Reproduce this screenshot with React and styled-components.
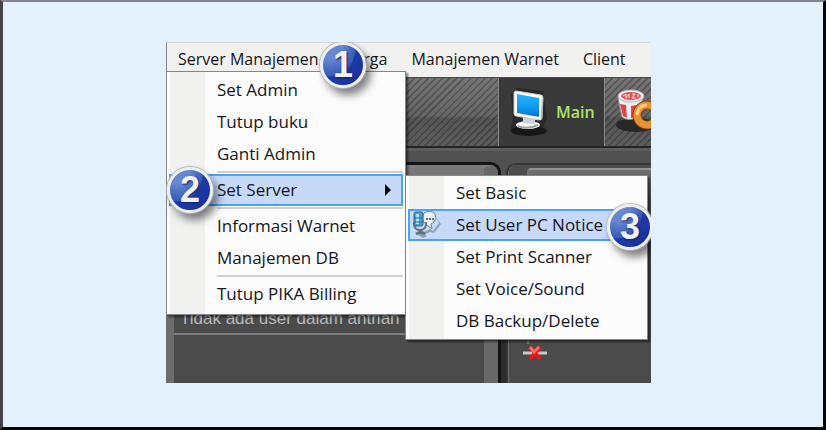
import React from 'react';
import styled, { createGlobalStyle } from 'styled-components';

const GlobalStyle = createGlobalStyle`
  * { box-sizing: border-box; }
  body { margin: 0; background: #e3f1fd; }
  button { border: 0; padding: 0; margin: 0; background: none; font: inherit; color: inherit; text-align: left; }
`;

const Frame = styled.main`
  min-height: 100vh;
  padding: 40px 172px 44px 163px;
  border-style: solid;
  border-width: 2px 3px 3px;
  border-color: #85838c #05050c #05050c #444247;
  background: #e3f1fd;
  display: flex;
  font-family: 'Open Sans', 'Noto Sans', sans-serif;
  font-size: 17px;
  color: #15151c;
`;

const AppWindow = styled.section`
  position: relative;
  flex: 1;
  min-width: 0;
  display: flex;
  flex-direction: column;
  overflow: hidden;
  background: #4b4b4b;
`;

const MenuBar = styled.nav`
  height: 35px;
  flex: none;
  display: flex;
  align-items: center;
  gap: 24px;
  padding: 0 11px 3px;
  background: #f1f1f0;
  border-top: 1px solid #d6d6d8;
  border-left: 1px solid #85858f;
  font-size: 16px;
`;

const MenuBarItem = styled.button`
  line-height: 24px;
  white-space: nowrap;
`;

const Menu = styled.div`
  position: absolute;
  z-index: ${p => (p.$sub ? 2 : 1)};
  left: ${p => (p.$sub ? 239 : 0)}px;
  top: ${p => (p.$sub ? 133 : 29)}px;
  width: ${p => (p.$sub ? 243 : 240)}px;
  padding: ${p => (p.$sub ? '1px 2px 2px' : '2px 2px 4px')};
  border: 1px solid #85858b;
  background: linear-gradient(to right, #fcfcfc 3px, #f1f1f0 3px 38px, #fcfcfc 38px);
  box-shadow: 2px 2px 2px rgba(0, 0, 0, 0.5);
`;

const MenuItem = styled.button`
  display: flex;
  align-items: center;
  width: 100%;
  height: 32px;
  padding-right: 10px;
  border: 2px solid ${p => (p.$active ? '#4aa3f5' : 'transparent')};
  background: ${p => (p.$active ? '#c6d9f8' : 'transparent')};
  white-space: nowrap;
  line-height: 24px;
`;

const IconSlot = styled.span`
  flex: none;
  display: flex;
  width: 46px;
  height: 28px;
  padding-left: 2px;
`;

const Label = styled.span`
  flex: 1;
`;

const Separator = styled.hr`
  height: 2px;
  margin: 1px 0 1px 48px;
  border: 0;
  background: #cfcfd0;
`;

const Toolbar = styled.div`
  height: 71px;
  flex: none;
  display: flex;
  border-top: 1px solid #4a4a4a;
  border-bottom: 2px solid #252525;
  background:
    repeating-linear-gradient(135deg, rgba(0, 0, 0, 0.25) 0 1px, transparent 2px 5px),
    linear-gradient(#747474, #666 55%, #565656 60%, #5c5c5c);
`;

const ToolbarSpace = styled.div`
  width: 333px;
  flex: none;
  border-right: 1px solid #898989;
`;

const ToolButton = styled.button`
  flex: none;
  display: flex;
  align-items: center;
  gap: 5px;
  width: ${p => (p.$active ? 106 : 80)}px;
  padding-left: ${p => (p.$active ? 9 : 7)}px;
  color: #abe36c;
  font-size: 16px;
  font-weight: 600;
  background: ${p => (p.$active ? '#393939' : 'transparent')};
  border-right: 1px solid #898989;
`;

const Workspace = styled.div`
  flex: 1;
  display: grid;
  grid-template-columns: 333px 1fr;
  padding-top: 14px;
  border-top: 3px solid #5c5c5c;
  background: linear-gradient(#515151 40px, #2b2b2b 41px);
`;

const QueuePanel = styled.section`
  margin-right: 1px;
  border-style: solid;
  border-width: 3px 14px 0 8px;
  border-color: #7b7b7b #686868 #7b7b7b #6c6c6e;
  border-radius: 0 8px 0 0;
  background: linear-gradient(#777 10px, #4b4b4b 11px);
  box-shadow: 0 0 0 3px #141414;
`;

const QueueText = styled.p`
  margin: 0;
  padding: 140px 0 4px 6px;
  border-bottom: 2px solid #7c7c7c;
  color: #b9b9b9;
  font: 17px/21px 'Liberation Sans', Arial, sans-serif;
  white-space: nowrap;
`;

const DetailPanel = styled.section`
  margin-left: 9px;
  padding: 3px 0 0 18px;
  border-left: 1px solid #6c6c6c;
  border-top-left-radius: 8px;
  background: #4b4b4b;
  box-shadow: 0 0 0 2px #363636;
`;

const DetailHeader = styled.div`
  height: 176px;
  border-top: 2px solid #929292;
  border-left: 2px solid #777;
  border-top-left-radius: 4px;
  background: linear-gradient(#707070, #4b4b4b 30px);
`;

const StatusIcon = styled.svg`
  display: block;
  margin-left: -6px;
`;

const Badge = styled.span`
  position: absolute;
  z-index: 3;
  left: ${p => p.$x}px;
  top: ${p => p.$y}px;
  width: 46px;
  height: 46px;
  display: flex;
  align-items: center;
  justify-content: center;
  border: 3px solid #eeeef0;
  border-radius: 50%;
  background:
    radial-gradient(ellipse at 20% 0%, #6687cf 0 25%, #3459b7 55%, transparent 56%),
    linear-gradient(135deg, #2446ad, #152f9e);
  box-shadow: 0 0 1px 1px #b5b5bb, 5px 7px 8px rgba(0, 0, 0, 0.5);
  color: #f2f2f4;
  font: 700 36px/40px 'Liberation Sans', Arial, sans-serif;
  text-shadow: 1px 1px 2px #102064;
`;

const MonitorIcon = () => (
  <svg width="43" height="54" viewBox="0 0 43 54" aria-hidden="true">
    <defs>
      <linearGradient id="screen" x2="0" y2="1">
        <stop stopColor="#25b5fb" />
        <stop offset=".5" stopColor="#159cf2" />
        <stop offset="1" stopColor="#0872db" />
      </linearGradient>
    </defs>
    <path d="M3 10 9 3l26 3 4 28-5 10-24 5-8-5 3-9z" fill="#292929" />
    <ellipse cx="21" cy="46" rx="18" ry="5" fill="#171717" />
    <ellipse cx="20" cy="40" rx="12" ry="4" fill="#f7f7f7" />
    <path d="M15 32 27 34v5l-12-1z" fill="#ced2d6" />
    <path d="M10 41q9 4 20-1" fill="none" stroke="#9da2a7" strokeWidth="2" />
    <path d="M6 8q0-2 2-2l25 4q2 0 2 3l-1 20q0 2-3 2L8 31q-2 0-2-3z" fill="#fff" stroke="#c8c8c8" />
    <path d="m9 9 22 4v19L9 28z" fill="url(#screen)" />
    <path d="m34 11 1 20-2 4z" fill="#a4a4a4" />
  </svg>
);

const SnackIcon = () => (
  <svg width="48" height="52" viewBox="0 0 48 52" aria-hidden="true">
    <ellipse cx="24" cy="39" rx="20" ry="7" fill="#272727" />
    <path d="m6 12 4 19q7 5 15 0l6-19z" fill="#eee" stroke="#929292" />
    <path d="m8 18 3 12 4 2-1-13m5 1v12l4-1 2-12" fill="#d7484c" />
    <ellipse cx="19" cy="10" rx="13" ry="6" fill="#f5eeee" stroke="#b8b8b8" />
    <ellipse cx="19" cy="10" rx="10" ry="4" fill="#de5557" />
    <path d="m11 10 3-2v4l3-4v4m3-4h3l-3 4h4m2-4v3" fill="none" stroke="#f8dede" />
    <circle cx="35" cy="29" r="10" fill="none" stroke="#87420f" strokeWidth="9" />
    <circle cx="35" cy="29" r="10" fill="none" stroke="#e69232" strokeWidth="7" />
    <path d="M25 29q1-10 10-10" fill="none" stroke="#ffce78" strokeWidth="3" />
  </svg>
);

const VoiceIcon = () => (
  <svg width="29" height="28" viewBox="0 0 29 28" aria-hidden="true">
    <path d="m12 21 6-3 3 2 6-8-3-6 5 7-7 9-4-1-5 2 2 2-4 2-5-3z" fill="#8fa3b1" />
    <path d="M12 2q7-4 11 1 2 5-1 8l-3 2 1 5-5-4q-7-4-3-12z" fill="#e9eef0" stroke="#71858e" />
    <path d="M14 8h2m1 0h2m1 0h2" stroke="#64747d" strokeWidth="2" />
    <path d="M2 11v3q1 5 6 5 5 0 6-5v-3" fill="none" stroke="#687984" strokeWidth="2" />
    <rect x="2" y="1" width="9" height="14" rx="2" fill="#4f9ed1" stroke="#3a617e" />
    <path d="M4 3h3v10H4z" fill="#a8e0f5" />
    <path d="M2 7h9M2 11h9" stroke="#2b6390" />
    <path d="M8 18v4m-4 1q5-3 9 0" fill="none" stroke="#63717a" strokeWidth="3" />
  </svg>
);

const Arrow = () => (
  <svg width="6" height="12" viewBox="0 0 6 12" aria-hidden="true">
    <path d="m0 0 6 6-6 6z" fill="#080808" />
  </svg>
);

const Item = ({ children, active, icon, submenu }) => (
  <MenuItem role="menuitem" $active={active} aria-haspopup={submenu ? 'menu' : undefined}>
    <IconSlot>{icon}</IconSlot>
    <Label>{children}</Label>
    {submenu && <Arrow />}
  </MenuItem>
);

export default function App() {
  return (
    <>
      <GlobalStyle />
      <Frame>
        <AppWindow>
          <MenuBar>
            <MenuBarItem>Server Manajemen</MenuBarItem>
            <MenuBarItem>Harga</MenuBarItem>
            <MenuBarItem>Manajemen Warnet</MenuBarItem>
            <MenuBarItem>Client</MenuBarItem>
          </MenuBar>
          <Toolbar>
            <ToolbarSpace />
            <ToolButton $active>
              <MonitorIcon />
              <span>Main</span>
            </ToolButton>
            <ToolButton aria-label="Snack"><SnackIcon /></ToolButton>
          </Toolbar>
          <Workspace>
            <QueuePanel>
              <QueueText>Tidak ada user dalam antrian</QueueText>
            </QueuePanel>
            <DetailPanel>
              <DetailHeader />
              <StatusIcon width="28" height="18" viewBox="0 0 28 18" aria-hidden="true">
                <path d="M2 9h24" stroke="#c8c8c8" strokeWidth="3" />
                <path d="m9 3 10 12M19 3 9 15" stroke="#ed1616" strokeWidth="4" />
                <path d="m9 3 4 5 5-5" fill="none" stroke="#ff6666" strokeWidth="3" />
              </StatusIcon>
            </DetailPanel>
          </Workspace>

          <Menu role="menu" aria-label="Server Manajemen">
            <Item>Set Admin</Item>
            <Item>Tutup buku</Item>
            <Item>Ganti Admin</Item>
            <Separator />
            <Item active submenu>Set Server</Item>
            <Separator />
            <Item>Informasi Warnet</Item>
            <Item>Manajemen DB</Item>
            <Separator />
            <Item>Tutup PIKA Billing</Item>
          </Menu>
          <Menu $sub role="menu" aria-label="Set Server">
            <Item>Set Basic</Item>
            <Item active icon={<VoiceIcon />}>Set User PC Notice</Item>
            <Item>Set Print Scanner</Item>
            <Item>Set Voice/Sound</Item>
            <Item>DB Backup/Delete</Item>
          </Menu>

          <Badge $x={154} $y={0}>1</Badge>
          <Badge $x={1} $y={125}>2</Badge>
          <Badge $x={441} $y={162}>3</Badge>
        </AppWindow>
      </Frame>
    </>
  );
}
